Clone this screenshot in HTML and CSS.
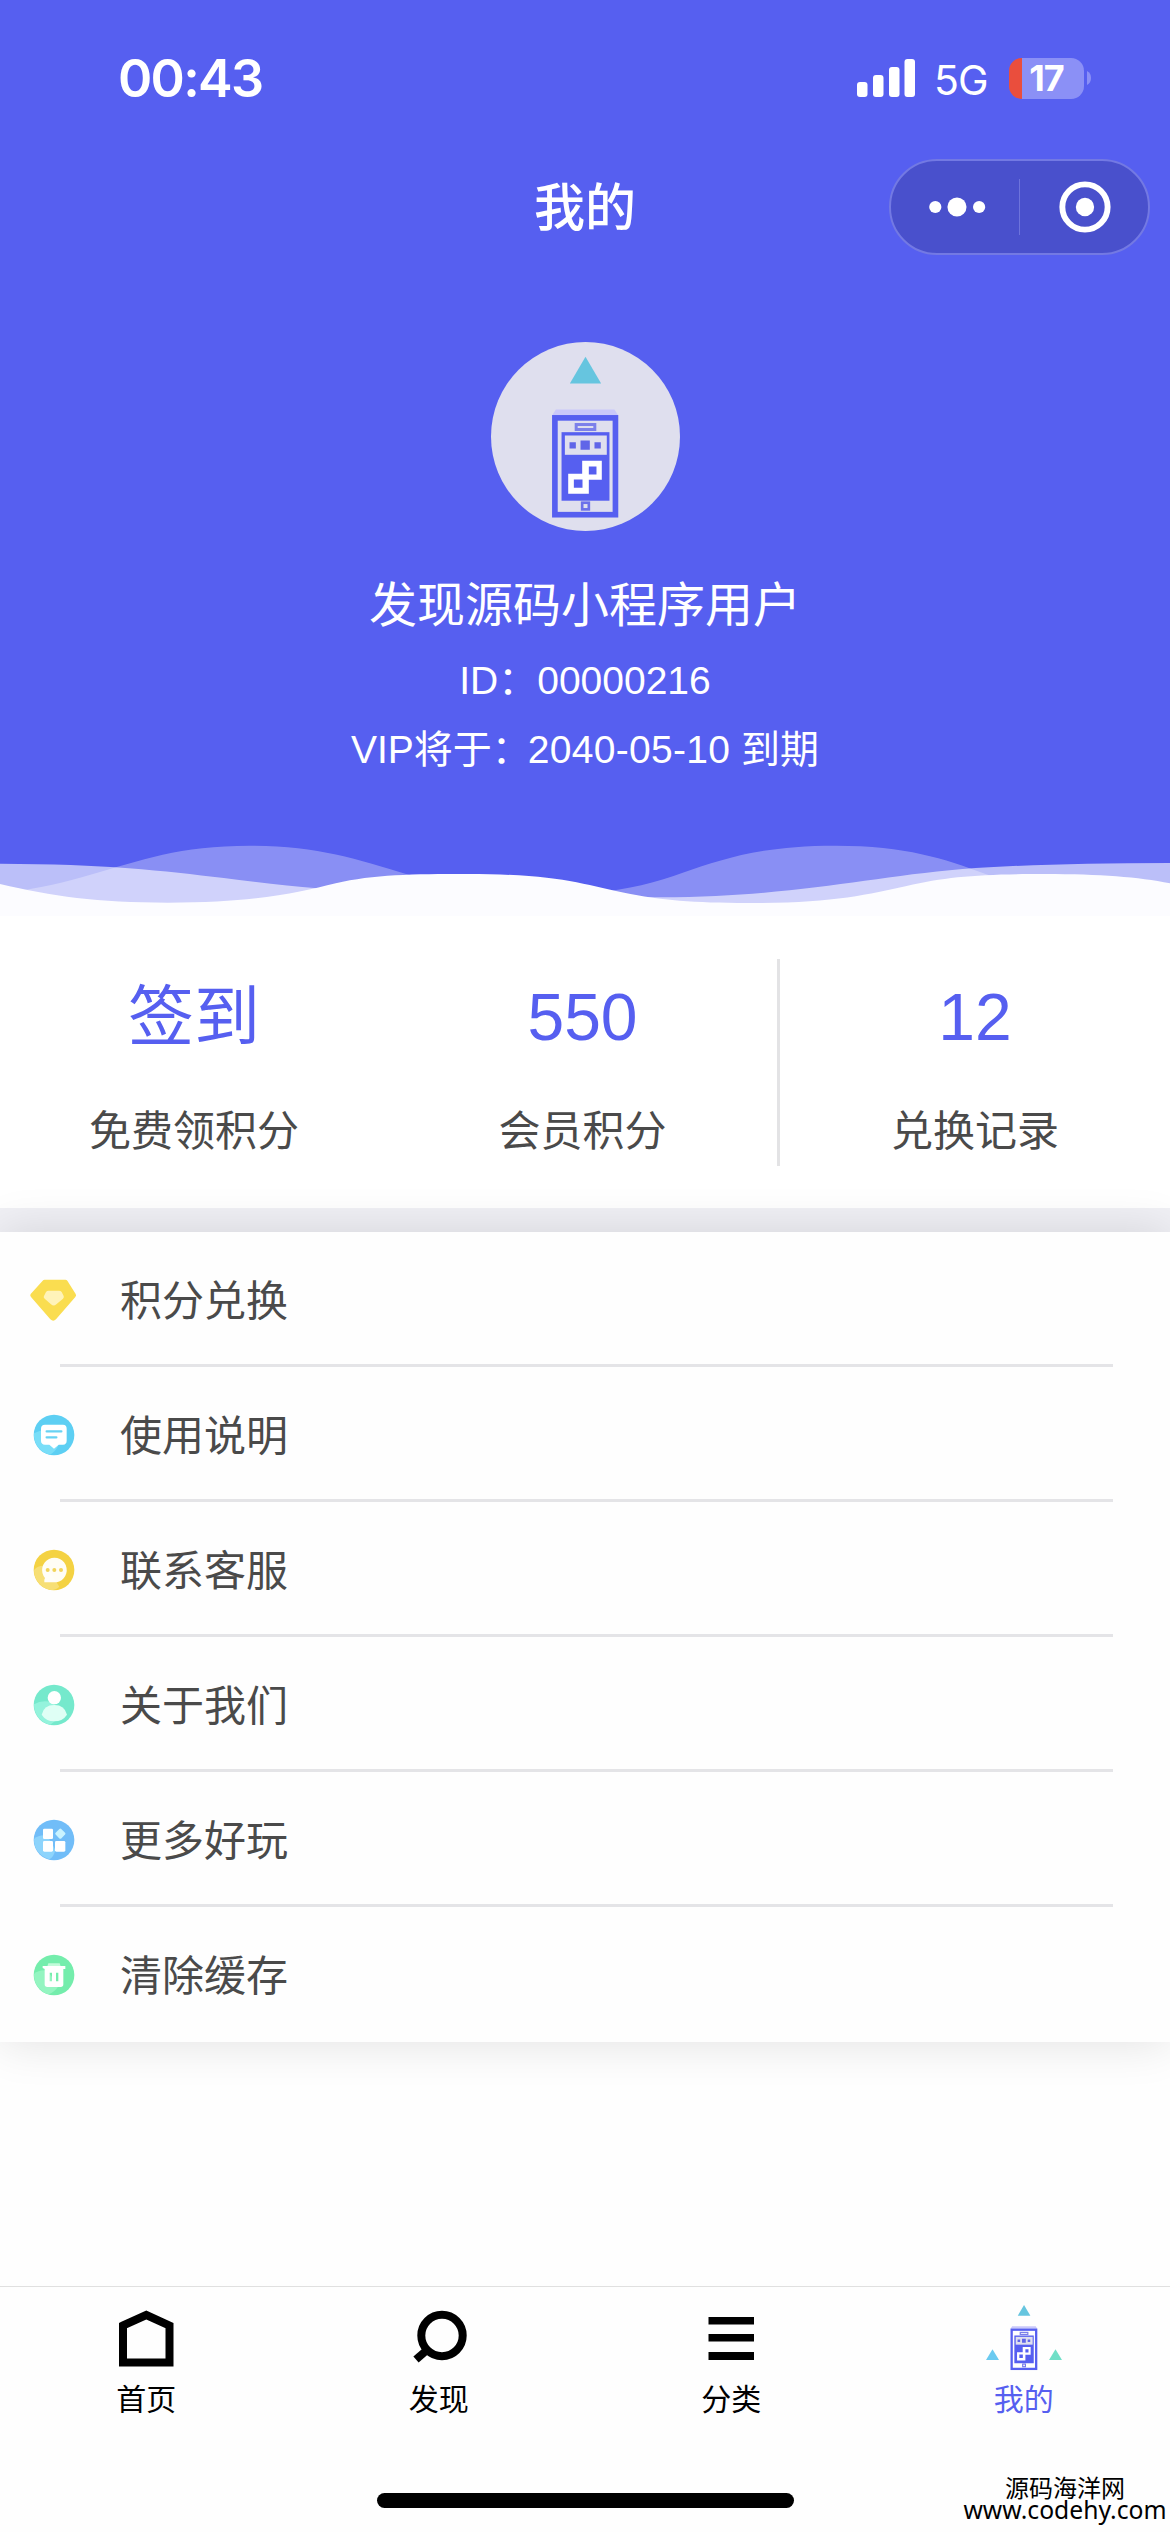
FILE: index.html
```html
<!DOCTYPE html>
<html lang="zh-CN">
<head>
<meta charset="utf-8">
<title>我的</title>
<link rel="stylesheet" href="styles.css">
</head>
<body>
<svg class="defs" width="0" height="0" aria-hidden="true">
  <symbol id="phone" viewBox="93 66 568 568" overflow="visible">
    <path d="M377 110 424 191H330Z" fill="#66c5df"/>
    <path d="M288 269H464L475 286H277Z" fill="#c9c8fa"/>
    <rect x="285" y="294" width="182" height="291" fill="none" stroke="#565ff0" stroke-width="17"/>
    <rect x="349" y="314" width="56" height="15" fill="none" stroke="#7c80ea" stroke-width="9"/>
    <rect x="305" y="337" width="144" height="206" fill="#565ff0"/>
    <rect class="phone-screen" x="315" y="347" width="126" height="58"/>
    <path d="M329 367h19v19h-19zM362 362h28v28h-28zM404 367h19v19h-19z" fill="#6065e8"/>
    <path d="M367 423H426V480H387V522H325V462H367ZM387 440V464H410V440ZM342 479V504H368V479Z" fill="#fff" fill-rule="evenodd"/>
    <rect x="367" y="549" width="20" height="20" fill="none" stroke="#6c70ea" stroke-width="8"/>
  </symbol>
</svg>
<div class="page">
  <header class="hero">
    <div class="status">
      <span class="time">00:43</span>
      <div class="status-right">
        <svg class="signal" viewBox="0 0 58 38" fill="#fff"><rect y="23" width="10.5" height="15" rx="3"/><rect x="16" y="16" width="10.5" height="22" rx="3"/><rect x="32" y="8" width="10.5" height="30" rx="3"/><rect x="47.5" width="10.5" height="38" rx="3"/></svg>
        <span class="net">5G</span>
        <div class="battery"><span>17</span></div>
        <svg class="nub" viewBox="0 0 4 14"><path d="M0 0Q4 2 4 7T0 14Z" fill="#8b90f6"/></svg>
      </div>
    </div>
    <div class="nav">
      <h1>我的</h1>
      <div class="capsule">
        <svg viewBox="0 0 130 96" fill="#fff"><circle cx="45" cy="48" r="6.2"/><circle cx="67" cy="48" r="9.7"/><circle cx="89.500" cy="48" r="6.2"/></svg>
        <i></i>
        <svg viewBox="0 0 130 96"><circle cx="66" cy="48" r="23" fill="none" stroke="#fff" stroke-width="6"/><circle cx="66" cy="48" r="9.300" fill="#fff"/></svg>
      </div>
    </div>
    <div class="profile">
      <svg class="avatar"><use href="#phone" width="189" height="189"/></svg>
      <p class="name">发现源码小程序用户</p>
      <p class="meta">ID：00000216</p>
      <p class="meta">VIP将于：<span class="date">2040-05-10</span> 到期</p>
    </div>
    <svg class="wave" viewBox="0 0 1568 216" preserveAspectRatio="none">
      <path d="M20 142C50 134 90 113 120 93C190 48 240 5 335 5C425 5 475 43 550 94L600 150V216H0V142ZM800 145C840 137 880 115 915 86C970 44 1020 5 1120 5C1215 5 1265 44 1320 89L1400 150V216H800Z" fill="#fff" fill-opacity=".3"/>
      <path d="M0 59C140 60 220 80 300 102Q370 123 425 133L500 160H885C1070 157 1160 100 1290 75Q1400 57 1568 57V216H0Z" fill="#fff" fill-opacity=".6"/>
      <path d="M0 120C70 157 130 176 225 176C345 176 400 145 450 118C500 91 555 90 625 90C750 90 780 121 845 150C895 172 940 177 1015 177C1115 177 1165 151 1215 126C1270 97 1315 90 1400 90C1475 90 1525 99 1568 118V216H0Z" fill="#fcfcff"/>
    </svg>
  </header>
  <section class="stats">
    <div><b>签到</b><span>免费领积分</span></div>
    <div><b>550</b><span>会员积分</span></div>
    <div><b>12</b><span>兑换记录</span></div>
  </section>
  <ul class="menu">
    <li><svg viewBox="0 0 150 150"><path d="M44 17Q46 14 50 14H112Q116 14 118 17L143 57Q146 62 142 66L84 133Q76 141 67 133L9 66Q5 62 8 57Z" fill="#fadd50"/><path d="M54 51Q57 47 61 47H93Q98 47 101 51L107 63Q109 67 105 71L85 88Q77 95 69 88L50 71Q45 67 48 63Z" fill="#fff3b9"/></svg><span>积分兑换</span></li>
    <li><svg viewBox="0 0 150 150"><circle cx="78" cy="75" r="61" fill="#5dcff3"/><path d="M18 70A61 61 0 0 0 66 134Q102 110 90 80Q60 48 18 70Z" fill="#79def8"/><path d="M51 44H105Q116 44 116 56V92Q116 103 105 104H92L78 116L64 104H51Q39 103 39 92V56Q39 44 51 44Z" fill="#fff"/><path d="M56 64H100M56 82H85" stroke="#67d2f3" stroke-width="7" stroke-linecap="round"/></svg><span>使用说明</span></li>
    <li><svg viewBox="2 0 150 150"><circle cx="80" cy="75" r="61" fill="#f4d243"/><path d="M20 75Q36 58 58 64L96 125Q86 135 70 135A61 61 0 0 1 20 75Z" fill="#f7df75"/><path d="M51 112Q50 103 53 99A37 37 0 1 1 79 112Z" fill="#fff" fill-opacity=".95"/><g fill="#f2d45b"><circle cx="61" cy="75" r="6"/><circle cx="81" cy="75" r="6"/><circle cx="101" cy="75" r="6"/></g></svg><span>联系客服</span></li>
    <li><svg viewBox="2 0 150 150"><circle cx="80" cy="75" r="61" fill="#75e9cc"/><path d="M20 73Q46 57 77 68Q113 105 69 134A61 61 0 0 1 20 73Z" fill="#94f3dc"/><circle cx="81" cy="53" r="20" fill="#fff"/><path d="M43 104Q49 75 81 75Q112 75 119 104Q106 124 81 124Q56 124 43 104Z" fill="#dffff5"/></svg><span>关于我们</span></li>
    <li><svg viewBox="2 0 150 150"><circle cx="80" cy="75" r="61" fill="#71bdf8"/><path d="M20 72Q36 58 60 62L84 104Q80 125 66 133A61 61 0 0 1 20 72Z" fill="#8dd4fc"/><g fill="#fff"><rect x="47" y="41" width="30" height="31" rx="4"/><rect x="47" y="78" width="30" height="32" rx="4"/><rect x="83" y="78" width="31" height="32" rx="4"/></g><rect x="87" y="44" width="24" height="24" rx="4" transform="rotate(45 99 56)" fill="#c9f3ff"/></svg><span>更多好玩</span></li>
    <li><svg viewBox="2 0 150 150"><circle cx="80" cy="75" r="61" fill="#74edac"/><path d="M20 72Q36 58 60 62L94 108Q81 127 64 133A61 61 0 0 1 20 72Z" fill="#94f5c1"/><path d="M60 49L63 40H97L100 49Z" fill="#c1fbd9"/><path d="M46 48H114V57H108V103Q108 111 100 111H60Q52 111 52 103V57L46 54ZM67 68V94H74V68ZM86 68V94H93V68Z" fill="#fff" fill-rule="evenodd"/></svg><span>清除缓存</span></li>
  </ul>
  <div class="spacer"></div>
  <nav class="tabs">
    <a><svg viewBox="0 0 80 60"><path d="M17 15.500 40.300 5 63.500 15.500V52.500H17Z" fill="none" stroke="#000" stroke-width="8"/></svg><span>首页</span></a>
    <a><svg viewBox="0 0 80 60" fill="none" stroke="#000"><circle cx="43" cy="25.500" r="20.700" stroke-width="8"/><path d="M28 40 17 49.500" stroke-width="8"/></svg><span>发现</span></a>
    <a><svg viewBox="0 0 80 60"><path d="M17.500 7h45.500v7.500H17.500zM17.500 24h45.500v7.500H17.500zM17.500 42h45.500v8H17.500z"/></svg><span>分类</span></a>
    <a class="active"><svg viewBox="0 0 80 60"><use href="#phone" x="1.800" y="-11" width="76.500" height="76.500"/><path d="M2 50 8.500 39.300 15 50Z" fill="#6bcaf0"/><path d="M65 50 71.500 39.300 78 50Z" fill="#70dfc7"/></svg><span>我的</span></a>
  </nav>
  <div class="home-bar"></div>
  <div class="watermark"><span>源码海洋网</span><span class="site">www.codehy.com</span></div>
</div>
</body>
</html>
```
FILE: styles.css
```css
* { box-sizing: border-box; margin: 0; padding: 0; }
body { background: #fff; font-family: "Liberation Sans", "Noto Sans CJK SC", sans-serif; color: #4a4a4a; }
.defs { position: absolute; }
.page { position: relative; width: 1170px; height: 2532px; overflow: hidden; display: flex; flex-direction: column; background: #fefefe; }

.hero { height: 916px; background: #565ff0; color: #fff; display: flex; flex-direction: column; }
.status { height: 156px; padding: 0 79px 0 118px; display: flex; justify-content: space-between; align-items: center; font-family: Inter, sans-serif; }
.time { font-size: 52px; font-weight: 600; line-height: 60px; letter-spacing: -1.7px; padding-top: 1px; }
.status-right { display: flex; align-items: center; }
.signal { width: 58px; height: 38px; margin-right: 19px; }
.net { font-size: 41px; line-height: 60px; width: 57px; letter-spacing: -1px; margin: 3px 18px 0 0; white-space: nowrap; }
.battery { width: 75px; height: 41px; border-radius: 13px; background: linear-gradient(90deg, #ea4e3d 13px, #8b90f6 13px); font-size: 36px; font-weight: 700; line-height: 41px; text-align: center; letter-spacing: -1px; }
.nub { width: 4px; height: 14px; margin-left: 3px; }
.nav { height: 104px; display: flex; align-items: flex-start; justify-content: flex-end; padding: 3px 20px 0 0; }
.nav h1 { width: 102px; margin: 19px 253px 0 0; font-size: 51px; font-weight: 500; line-height: 62px; }
.capsule { width: 261px; height: 96px; border: 2px solid #7379e3; border-radius: 49px; background: #4950cc; display: flex; align-items: center; }
.capsule svg { width: 128px; height: 96px; }
.capsule i { width: 1px; height: 56px; background: #6d73dc; }
.profile { height: 584px; padding-top: 82px; display: flex; flex-direction: column; align-items: center; }
.avatar { width: 189px; height: 189px; border-radius: 50%; background: #dfdfee; }
.name { margin-top: 45px; font-size: 48px; line-height: 60px; }
.meta { font-size: 39px; line-height: 69px; }
.name + .meta { margin-top: 10px; }
.date { margin-left: -3px; letter-spacing: .3px; }
.phone-screen { fill: #dfdfee; }
.wave { width: 1170px; height: 72px; display: block; }

.stats { height: 316px; background: #fff; border-bottom: 24px solid #f0f0f5; display: grid; grid-template-columns: repeat(3, 1fr); padding: 43px 0 42px; }
.stats div { display: flex; flex-direction: column; align-items: center; padding-right: 2px; }
.stats div:nth-child(2) { border-right: 3px solid #e3e3e5; }
.stats div:last-child { padding-right: 0; }
.stats b { margin-top: 16px; font-size: 66px; font-weight: 400; line-height: 84px; color: #565ff0; }
.stats span { margin-top: 43px; font-size: 42px; line-height: 60px; }

.menu { height: 810px; list-style: none; background: #fefefe; box-shadow: 0 0 45px rgba(0, 0, 0, .12); }
.menu li { height: 135px; padding-left: 28px; display: flex; align-items: center; background: linear-gradient(#e4e4e7, #e4e4e7) 60px 100% / 1053px 3px no-repeat; }
.menu li:last-child { background: none; }
.menu svg { width: 50px; height: 50px; margin-right: 42px; }
.menu li span { padding-top: 5px; font-size: 42px; line-height: 60px; }

.spacer { height: 244px; }
.tabs { height: 150px; border-top: 1px solid #e0e0e0; display: grid; grid-template-columns: repeat(4, 1fr); }
.tabs a { display: flex; flex-direction: column; align-items: center; padding-top: 23px; color: #000; }
.tabs svg { width: 80px; height: 60px; overflow: visible; }
.tabs span { margin-top: 10px; font-size: 30px; line-height: 40px; }
.tabs .active { color: #565ff0; }
.tabs .phone-screen { fill: #fff; }
.home-bar { width: 417px; height: 15px; border-radius: 8px; background: #000; margin: 57px auto 0; }
.watermark { position: absolute; right: 3px; top: 2474px; width: 204px; display: flex; flex-direction: column; align-items: center; color: #000; font-size: 24px; line-height: 30px; font-weight: 400; }
.watermark .site { font-family: "Noto Sans", sans-serif; font-size: 24.7px; line-height: 26px; margin-top: -7px; white-space: nowrap; padding-bottom: 2px; }
```
